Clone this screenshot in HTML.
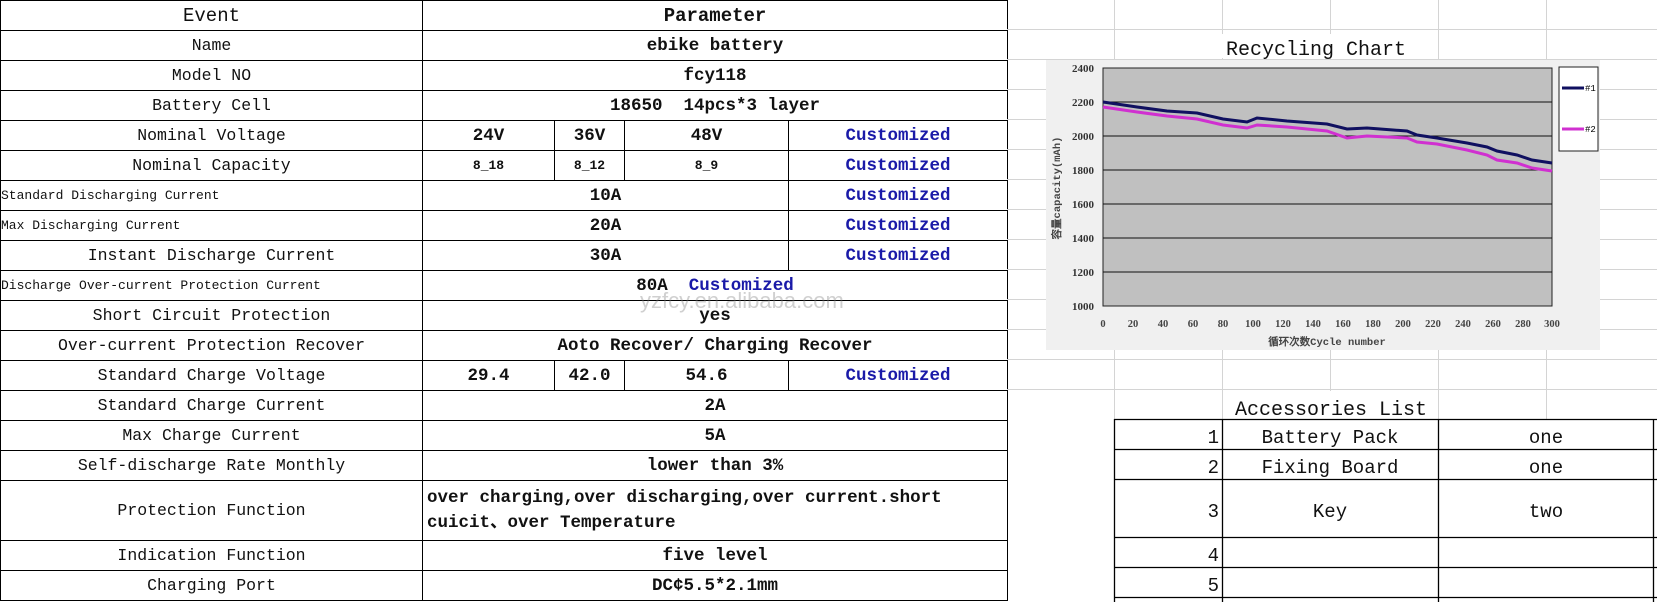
<!DOCTYPE html>
<html><head><meta charset="utf-8"><style>
body{margin:0;width:1657px;height:602px;overflow:hidden;background:#fff;position:relative;font-family:"Liberation Mono","Noto Sans CJK SC",monospace;}
table.m{position:absolute;left:0;top:0;border-collapse:collapse;width:1007px;table-layout:fixed;}
table.m td{border:1px solid #000;height:29px;padding:0;text-align:center;font-size:16.5px;white-space:nowrap;overflow:hidden;color:#111;}
table.m td.b{font-weight:bold;font-size:17.5px;}
table.m td.s{text-align:left;font-size:13px;}
table.m td.c,.c{color:#1a1aa8;font-weight:bold;font-size:17.5px;}
#grid{position:absolute;left:1007px;top:0;}
</style></head><body>
<table class="m">
<colgroup><col style="width:422px"><col style="width:132px"><col style="width:70px"><col style="width:164px"><col style="width:219px"></colgroup>
<tr><td style="font-size:19px">Event</td><td colspan="4" class="b" style="font-size:19px">Parameter</td></tr>
<tr><td>Name</td><td colspan="4" class="b">ebike battery</td></tr>
<tr><td>Model NO</td><td colspan="4" class="b">fcy118</td></tr>
<tr><td>Battery Cell</td><td colspan="4" class="b">18650&nbsp; 14pcs*3 layer</td></tr>
<tr><td>Nominal Voltage</td><td class="b">24V</td><td class="b">36V</td><td class="b">48V</td><td class="c">Customized</td></tr>
<tr><td>Nominal Capacity</td><td class="b" style="font-size:13px">8_18</td><td class="b" style="font-size:13px">8_12</td><td class="b" style="font-size:13px">8_9</td><td class="c">Customized</td></tr>
<tr><td class="s">Standard Discharging Current</td><td colspan="3" class="b">10A</td><td class="c">Customized</td></tr>
<tr><td class="s">Max Discharging Current</td><td colspan="3" class="b">20A</td><td class="c">Customized</td></tr>
<tr><td>Instant Discharge Current</td><td colspan="3" class="b">30A</td><td class="c">Customized</td></tr>
<tr><td class="s">Discharge Over-current Protection Current</td><td colspan="4" class="b">80A&nbsp; <span class="c">Customized</span></td></tr>
<tr><td>Short Circuit Protection</td><td colspan="4" class="b">yes</td></tr>
<tr><td>Over-current Protection Recover</td><td colspan="4" class="b">Aoto Recover/ Charging Recover</td></tr>
<tr><td>Standard Charge Voltage</td><td class="b">29.4</td><td class="b">42.0</td><td class="b">54.6</td><td class="c">Customized</td></tr>
<tr><td>Standard Charge Current</td><td colspan="4" class="b">2A</td></tr>
<tr><td>Max Charge Current</td><td colspan="4" class="b">5A</td></tr>
<tr><td>Self-discharge Rate Monthly</td><td colspan="4" class="b">lower than 3%</td></tr>
<tr><td style="height:59px">Protection Function</td><td colspan="4" class="b" style="text-align:left;white-space:normal;line-height:25px;padding-left:4px">over charging,over discharging,over current.short<br>cuicit、over Temperature</td></tr>
<tr><td>Indication Function</td><td colspan="4" class="b">five level</td></tr>
<tr><td>Charging Port</td><td colspan="4" class="b">DC¢5.5*2.1mm</td></tr>
</table>
<div style="position:absolute;left:640px;top:288px;font-family:'Liberation Sans',sans-serif;font-size:22px;color:rgba(120,120,120,0.35)">yzfcy.en.alibaba.com</div>
<svg id="grid" width="650" height="602" style="left:1007px" font-family="Liberation Mono,monospace">
<g stroke="#d4d4d4" stroke-width="1">
<line x1="107.5" y1="0" x2="107.5" y2="602"/><line x1="215.5" y1="0" x2="215.5" y2="602"/><line x1="323.5" y1="0" x2="323.5" y2="602"/><line x1="431.5" y1="0" x2="431.5" y2="602"/><line x1="539.5" y1="0" x2="539.5" y2="602"/>
<line x1="0" y1="29.5" x2="650" y2="29.5"/><line x1="0" y1="59.5" x2="650" y2="59.5"/><line x1="0" y1="89.5" x2="650" y2="89.5"/><line x1="0" y1="119.5" x2="650" y2="119.5"/><line x1="0" y1="149.5" x2="650" y2="149.5"/><line x1="0" y1="179.5" x2="650" y2="179.5"/><line x1="0" y1="209.5" x2="650" y2="209.5"/><line x1="0" y1="239.5" x2="650" y2="239.5"/><line x1="0" y1="269.5" x2="650" y2="269.5"/><line x1="0" y1="299.5" x2="650" y2="299.5"/><line x1="0" y1="329.5" x2="650" y2="329.5"/><line x1="0" y1="359.5" x2="650" y2="359.5"/><line x1="0" y1="389.5" x2="650" y2="389.5"/>
</g>
<rect x="200" y="34" width="220" height="24" fill="#fff"/>
<text x="309" y="55" font-size="20" text-anchor="middle" fill="#111">Recycling Chart</text>
<rect x="39" y="60" width="554" height="290" fill="#f0f0f0"/>
<rect x="96" y="68" width="449" height="238" fill="#c0c0c0" stroke="#222"/>
<g stroke="#111" stroke-width="1"><line x1="96" y1="102" x2="545" y2="102"/><line x1="96" y1="136" x2="545" y2="136"/><line x1="96" y1="170" x2="545" y2="170"/><line x1="96" y1="204" x2="545" y2="204"/><line x1="96" y1="238" x2="545" y2="238"/><line x1="96" y1="272" x2="545" y2="272"/></g>
<g font-size="11" font-weight="bold" fill="#333" text-anchor="end" font-family="Liberation Serif,serif">
<text x="87" y="72">2400</text><text x="87" y="106">2200</text><text x="87" y="140">2000</text><text x="87" y="174">1800</text><text x="87" y="208">1600</text><text x="87" y="242">1400</text><text x="87" y="276">1200</text><text x="87" y="310">1000</text></g>
<g font-size="10.5" font-weight="bold" fill="#444" text-anchor="middle" font-family="Liberation Serif,serif">
<text x="96" y="327">0</text><text x="126" y="327">20</text><text x="156" y="327">40</text><text x="186" y="327">60</text><text x="216" y="327">80</text><text x="246" y="327">100</text><text x="276" y="327">120</text><text x="306" y="327">140</text><text x="336" y="327">160</text><text x="366" y="327">180</text><text x="396" y="327">200</text><text x="426" y="327">220</text><text x="456" y="327">240</text><text x="486" y="327">260</text><text x="516" y="327">280</text><text x="545" y="327">300</text></g>
<text x="320" y="345" font-size="10.5" font-weight="bold" fill="#444" text-anchor="middle">循环次数Cycle number</text>
<text transform="translate(53,188) rotate(-90)" font-size="10.5" font-weight="bold" fill="#444" text-anchor="middle">容量capacity(mAh)</text>
<polyline fill="none" stroke="#d030d0" stroke-width="3" points="96,107 130,112 160,116 190,119 216,125 240,128 250,125 280,127 320,131 340,138 360,136 400,138 410,142 430,144 460,150 480,155 490,160 510,163 525,168 545,171"/>
<polyline fill="none" stroke="#101060" stroke-width="3" points="96,102 130,107 160,111 190,113 216,119 240,122 250,118 280,121 320,124 340,129 360,128 400,131 410,135 430,138 460,143 480,147 490,151 510,155 525,160 545,163"/>
<rect x="552" y="67" width="39" height="84" fill="#fff" stroke="#222"/>
<line x1="555" y1="88" x2="577" y2="88" stroke="#101060" stroke-width="3"/><text x="578" y="91" font-size="9">#1</text>
<line x1="555" y1="129" x2="577" y2="129" stroke="#d030d0" stroke-width="3"/><text x="578" y="132" font-size="9">#2</text>
<rect x="216" y="391" width="215" height="28" fill="#fff"/>
<text x="324" y="415" font-size="20" text-anchor="middle" fill="#111">Accessories List</text>
<rect x="107" y="419" width="560" height="200" fill="#fff"/>
<g stroke="#000" stroke-width="1.3">
<line x1="107" y1="419.5" x2="650" y2="419.5"/><line x1="107" y1="449.5" x2="650" y2="449.5"/><line x1="107" y1="479.5" x2="650" y2="479.5"/><line x1="107" y1="537.5" x2="650" y2="537.5"/><line x1="107" y1="567.5" x2="650" y2="567.5"/><line x1="107" y1="597.5" x2="650" y2="597.5"/>
<line x1="107.5" y1="419" x2="107.5" y2="602"/><line x1="215.5" y1="419" x2="215.5" y2="602"/><line x1="431.5" y1="419" x2="431.5" y2="602"/><line x1="646.5" y1="419" x2="646.5" y2="602"/>
</g>
<g font-size="19" fill="#111">
<text x="212" y="443" text-anchor="end">1</text><text x="212" y="473" text-anchor="end">2</text><text x="212" y="517" text-anchor="end">3</text><text x="212" y="561" text-anchor="end">4</text><text x="212" y="591" text-anchor="end">5</text>
<text x="323" y="443" text-anchor="middle">Battery Pack</text><text x="323" y="473" text-anchor="middle">Fixing Board</text><text x="323" y="517" text-anchor="middle">Key</text>
<text x="539" y="443" text-anchor="middle">one</text><text x="539" y="473" text-anchor="middle">one</text><text x="539" y="517" text-anchor="middle">two</text>
</g>
</svg>
</body></html>
